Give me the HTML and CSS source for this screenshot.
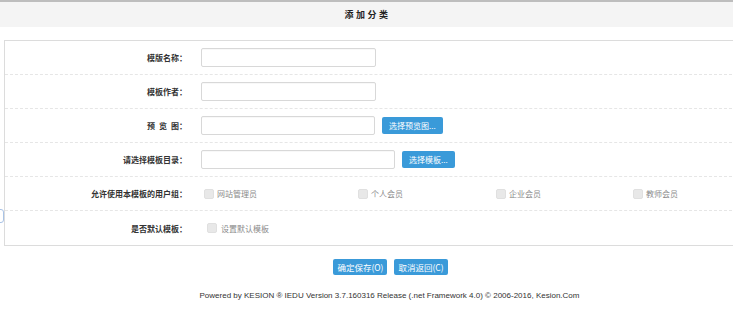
FILE: index.html
```html
<!DOCTYPE html>
<html lang="zh-CN">
<head>
<meta charset="utf-8">
<title>添加分类</title>
<link rel="stylesheet" href="styles.css">
</head>
<body>
<div class="topbar"><span class="title">添加分类</span></div>

<div class="card">
  <div class="row">
    <div class="label">模版名称：</div>
    <div class="field"><span class="input w175"></span></div>
  </div>
  <div class="row">
    <div class="label">模板作者：</div>
    <div class="field"><span class="input w175"></span></div>
  </div>
  <div class="row">
    <div class="label">预&ensp;览&ensp;图：</div>
    <div class="field"><span class="input w174"></span><span class="btn btn-sm">选择预览图...</span></div>
  </div>
  <div class="row">
    <div class="label">请选择模板目录：</div>
    <div class="field"><span class="input w194"></span><span class="btn btn-sm">选择模板...</span></div>
  </div>
  <div class="row">
    <div class="label">允许使用本模板的用户组：</div>
    <div class="field groups">
      <span class="chk"><span class="box"></span>网站管理员</span>
      <span class="chk"><span class="box"></span>个人会员</span>
      <span class="chk"><span class="box"></span>企业会员</span>
      <span class="chk"><span class="box"></span>教师会员</span>
    </div>
  </div>
  <div class="row last">
    <div class="label">是否默认模板：</div>
    <div class="field"><span class="chk single"><span class="box"></span>设置默认模板</span></div>
  </div>
</div>

<div class="actions">
  <span class="btn btn-lg">确定保存(O)</span>
  <span class="btn btn-lg">取消返回(C)</span>
</div>

<div class="footer">Powered by KESION ® IEDU Version 3.7.160316 Release (.net Framework 4.0) © 2006-2016, Kesion.Com</div>

<div class="sidetab"></div>
</body>
</html>
```

FILE: styles.css
```css
html, body {
  margin: 0;
  padding: 0;
  overflow: hidden;
  background: #fff;
  width: 733px;
  height: 312px;
}
body {
  font-family: "Noto Sans CJK SC", "Liberation Sans", sans-serif;
  color: #333;
  position: relative;
}
.topbar {
  height: 25px;
  border-top: 2px solid #bdbdbd;
  background: #f4f4f4;
  display: flex;
  align-items: center;
  justify-content: center;
}
.title {
  font-size: 9px;
  font-weight: bold;
  letter-spacing: 2.5px;
  color: #222;
  padding-left: 2px;
}
.card {
  margin: 13px 0 0 4px;
  width: 740px;
  border: 1px solid #dcdcdc;
  border-right: none;
}
.row {
  display: grid;
  grid-template-columns: 182px 1fr;
  align-items: center;
  height: 33px;
  border-bottom: 1px dashed #e6e6e6;
  margin-right: 13px;
}
.row.last {
  border-bottom: none;
  height: 34px;
}
.label {
  text-align: right;
  font-size: 8px;
  font-weight: bold;
  color: #333;
  white-space: nowrap;
}
.field {
  display: flex;
  align-items: center;
  padding-left: 14px;
}
.input {
  display: block;
  height: 17px;
  border: 1px solid #d8d8d8;
  border-radius: 2px;
  background: #fff;
  box-shadow: inset 0 1px 1px rgba(0,0,0,0.03);
}
.w175 { width: 173px; }
.w174 { width: 172px; }
.w194 { width: 192px; }
.btn {
  display: inline-flex;
  align-items: center;
  justify-content: center;
  background: #3a9ad9;
  color: #fff;
  border-radius: 2px;
  white-space: nowrap;
}
.btn-sm {
  height: 17px;
  font-size: 8px;
  padding: 0 7px;
  margin-left: 7px;
}
.groups {
  display: grid;
  grid-template-columns: 154px 138px 137px auto;
  padding-left: 17px;
}
.chk {
  display: inline-flex;
  align-items: center;
  font-size: 8px;
  color: #8a8a8a;
  white-space: nowrap;
}
.chk.single {
  margin-left: 6px;
}
.box {
  display: inline-block;
  width: 10px;
  height: 10px;
  border-radius: 2px;
  background: #e8e8e8;
  border: 1px solid #e0e0e0;
  box-sizing: border-box;
  margin-right: 3px;
}
.chk.single .box { margin-right: 4px; }
.actions {
  display: flex;
  justify-content: center;
  gap: 7px;
  margin-top: 13px;
  padding-left: 48px;
}
.btn-lg {
  height: 16px;
  font-size: 8.5px;
  font-family: "Noto Sans CJK SC", "Liberation Sans", sans-serif;
  padding: 0 4px;
}
.footer {
  text-align: center;
  font-family: "Liberation Sans", Arial, sans-serif;
  font-size: 8px;
  color: #333;
  margin-top: 16px;
  padding-left: 46px;
}
.sidetab {
  position: absolute;
  left: -8px;
  top: 209px;
  width: 10px;
  height: 12px;
  border: 1px solid #a9c3e6;
  border-radius: 3px;
  background: #fff;
}
```
